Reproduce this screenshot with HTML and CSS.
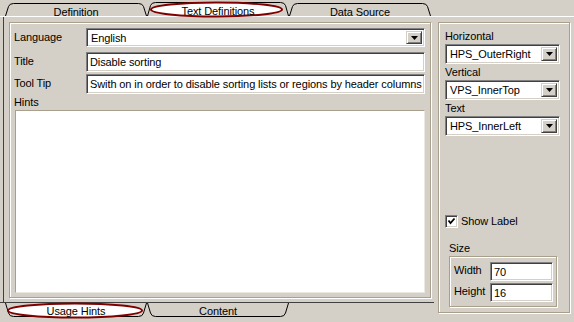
FILE: index.html
```html
<!DOCTYPE html>
<html lang="en">
<head>
  <meta charset="UTF-8">
  <title>Text Definitions</title>
  <link rel="stylesheet" href="styles.css">
</head>
<body>

  <div class="window">
    <div class="tabs tabs-top">
      <div class="tab">
        <svg class="tab-shape" viewBox="0 0 142 14"><path d="M0.5 14 L3.5 4.5 Q4.5 1.5 8.5 1.5 H133.5 Q137.5 1.5 138.5 4.5 L141.5 14"/></svg>
        <span class="tab-label">Definition</span>
      </div>
      <div class="tab active">
        <svg class="tab-shape" viewBox="0 0 142 14"><path d="M0.5 14 L3.5 3.5 Q4.5 0.5 8.5 0.5 H133.5 Q137.5 0.5 138.5 3.5 L141.5 14"/><ellipse cx="69.5" cy="7.5" rx="65.5" ry="7"/></svg>
        <span class="tab-label">Text Definitions</span>
      </div>
      <div class="tab">
        <svg class="tab-shape" viewBox="0 0 142 14"><path d="M0.5 14 L3.5 4.5 Q4.5 1.5 8.5 1.5 H133.5 Q137.5 1.5 138.5 4.5 L141.5 14"/></svg>
        <span class="tab-label">Data Source</span>
      </div>
    </div>

    <div class="content">
      <div class="col-left">
        <div class="page">
          <div class="panel text-panel">
            <div class="row">
              <label class="row-label">Language</label>
              <div class="select sunken">
                <span class="select-text">English</span>
                <span class="drop-btn"><svg width="7" height="4" viewBox="0 0 7 4"><polygon points="0,0 7,0 3.5,4"/></svg></span>
              </div>
            </div>
            <div class="row row-title">
              <label class="row-label">Title</label>
              <div class="input sunken">Disable sorting</div>
            </div>
            <div class="row row-tip">
              <label class="row-label">Tool Tip</label>
              <div class="input sunken">Swith on in order to disable sorting lists or regions by header columns</div>
            </div>
            <div class="hints-label">Hints</div>
            <div class="hints"></div>
          </div>
        </div>

        <div class="tabs tabs-bottom">
          <div class="tab active">
            <svg class="tab-shape" viewBox="0 0 142 15"><path d="M0.5 0 L3.5 10 Q4.5 13.5 8.5 13.5 H133.5 Q137.5 13.5 138.5 10 L141.5 0"/><ellipse cx="70" cy="7.5" rx="67" ry="7"/></svg>
            <span class="tab-label">Usage Hints</span>
          </div>
          <div class="tab">
            <svg class="tab-shape" viewBox="0 0 142 15"><path d="M0.5 0 L3.5 10 Q4.5 13.5 8.5 13.5 H133.5 Q137.5 13.5 138.5 10 L141.5 0"/></svg>
            <span class="tab-label">Content</span>
          </div>
        </div>
      </div>

      <div class="panel side-panel">
        <div class="side-label">Horizontal</div>
        <div class="select sunken">
          <span class="select-text">HPS_OuterRight</span>
          <span class="drop-btn"><svg width="7" height="4" viewBox="0 0 7 4"><polygon points="0,0 7,0 3.5,4"/></svg></span>
        </div>
        <div class="side-label">Vertical</div>
        <div class="select sunken">
          <span class="select-text">VPS_InnerTop</span>
          <span class="drop-btn"><svg width="7" height="4" viewBox="0 0 7 4"><polygon points="0,0 7,0 3.5,4"/></svg></span>
        </div>
        <div class="side-label">Text</div>
        <div class="select sunken">
          <span class="select-text">HPS_InnerLeft</span>
          <span class="drop-btn"><svg width="7" height="4" viewBox="0 0 7 4"><polygon points="0,0 7,0 3.5,4"/></svg></span>
        </div>

        <div class="check-row">
          <span class="checkbox sunken"><svg width="9" height="9" viewBox="0 0 9 9"><polyline points="1.5,3.5 3.5,6 7.5,1.5"/></svg></span>
          <span>Show Label</span>
        </div>

        <div class="size-label">Size</div>
        <div class="panel size-box">
          <div class="size-row">
            <span class="size-name">Width</span>
            <div class="input size-input sunken">70</div>
          </div>
          <div class="size-row">
            <span class="size-name">Height</span>
            <div class="input size-input sunken">16</div>
          </div>
        </div>
      </div>
    </div>
  </div>

</body>
</html>
```

FILE: styles.css
```css
* {
  box-sizing: border-box;
}

body {
  margin: 0;
  background-color: #d4d0c8;
  font-family: "Liberation Sans", Arial, sans-serif;
  font-size: 11px;
  letter-spacing: -0.1px;
  color: #000;
}

.window {
  width: 574px;
  height: 322px;
  display: flex;
  flex-direction: column;
  overflow: hidden;
}

/* tabs */
.tabs {
  display: flex;
  padding-left: 5px;
}

.tabs-top {
  height: 17px;
  border-bottom: 1px solid #fff;
}

.tabs-bottom {
  height: 20px;
  border-top: 1px solid #404040;
}

.tab {
  position: relative;
  width: 142px;
  text-align: center;
}

.tab-shape {
  position: absolute;
  left: 0;
  width: 142px;
  overflow: visible;
  fill: none;
  stroke: #000;
  stroke-width: 1;
}

.tabs-top .tab-shape {
  top: 2px;
  height: 14px;
}

.tabs-bottom .tab-shape {
  top: 0;
  height: 15px;
}

.tab-shape ellipse {
  fill: #fff;
  stroke: #800000;
  stroke-width: 2;
}

.tab-label {
  position: relative;
  display: block;
  line-height: 14px;
}

.tabs-top .tab-label {
  padding-top: 5px;
}

.tabs-top .active .tab-label {
  padding-top: 4px;
}

.tabs-bottom .tab-label {
  padding-top: 1px;
}

/* layout */
.content {
  flex: 1;
  display: flex;
}

.col-left {
  width: 434px;
  display: flex;
  flex-direction: column;
}

.page {
  flex: 1;
  margin-left: 3px;
  border-left: 1px solid #404040;
  padding: 5px 0 0 5px;
}

.panel {
  border: 1px solid #a8a08c;
  box-shadow: inset 1px 1px #fff, 1px 1px #fff;
}

.text-panel {
  width: 422px;
  height: 276px;
  padding: 5px 5px 4px 4px;
  display: flex;
  flex-direction: column;
}

/* fields */
.sunken {
  background-color: #fff;
  border: 1px solid;
  border-color: #808080 #fff #fff #808080;
  box-shadow: inset 1px 1px #404040, inset -1px -1px #d4d0c8;
}

.row {
  display: flex;
}

.row-title {
  margin-top: 5px;
}

.row-tip {
  margin-top: 2px;
}

.row-label {
  width: 72px;
  padding-top: 2px;
  line-height: 14px;
}

.row .select {
  flex: 1;
  height: 19px;
}

.row .input {
  flex: 1;
  height: 20px;
}

.select {
  display: flex;
  padding: 2px;
}

.select-text {
  flex: 1;
  padding: 1px 0 0 2px;
  line-height: 13px;
  white-space: nowrap;
}

.drop-btn {
  width: 16px;
  display: flex;
  align-items: center;
  justify-content: center;
  background-color: #d4d0c8;
  border: 1px solid;
  border-color: #d4d0c8 #404040 #404040 #d4d0c8;
  box-shadow: inset 1px 1px #fff, inset -1px -1px #808080;
}

.input {
  padding: 2px 0 0 3px;
  line-height: 14px;
  white-space: nowrap;
  overflow: hidden;
}

.hints-label {
  height: 16px;
  line-height: 16px;
}

.hints {
  height: 183px;
  margin-left: 1px;
  background-color: #fff;
  border: 1px solid;
  border-color: #a8a08c #ece9e2 #ece9e2 #a8a08c;
}

/* right panel */
.side-panel {
  width: 132px;
  height: 291px;
  margin: 5px 0 0 4px;
  padding: 5px 8px 0 6px;
  display: flex;
  flex-direction: column;
}

.side-label {
  height: 16px;
  line-height: 16px;
}

.side-panel > .select {
  width: 115px;
  height: 20px;
}

.check-row {
  display: flex;
  align-items: center;
  gap: 3px;
  margin-top: 78px;
  height: 14px;
}

.checkbox {
  width: 13px;
  height: 13px;
  display: flex;
  align-items: center;
  justify-content: center;
}

.checkbox polyline {
  fill: none;
  stroke: #000;
  stroke-width: 1.8;
}

.size-label {
  margin: 13px 0 0 4px;
  height: 15px;
  line-height: 15px;
}

.size-box {
  width: 108px;
  height: 51px;
  margin-left: 4px;
  padding: 5px 3px 0 4px;
}

.size-row {
  display: flex;
}

.size-row + .size-row {
  margin-top: 2px;
}

.size-name {
  width: 36px;
  line-height: 17px;
}

.size-input {
  width: 63px;
  height: 19px;
}
```
